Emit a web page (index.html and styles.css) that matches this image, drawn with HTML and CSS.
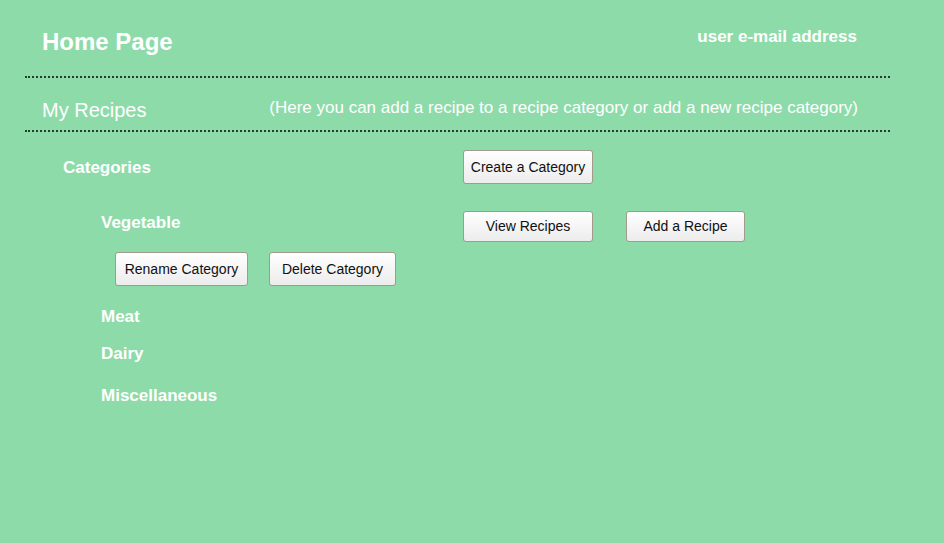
FILE: index.html
```html
<!DOCTYPE html>
<html>
<head>
<meta charset="utf-8">
<link rel="stylesheet" href="styles.css">
</head>
<body>
<div class="page">
  <header class="top">
    <h1 class="title">Home Page</h1>
    <div class="email">user e-mail address</div>
  </header>
  <section class="sub">
    <h2 class="subtitle">My Recipes</h2>
    <p class="hint">(Here you can add a recipe to a recipe category or add a new recipe category)</p>
  </section>
  <main class="content">
    <div class="row row-cats">
      <div class="label label-cats">Categories</div>
      <button class="btn btn-create">Create a Category</button>
    </div>
    <div class="row row-veg">
      <div class="label label-cat">Vegetable</div>
      <button class="btn btn-view">View Recipes</button>
      <button class="btn btn-add">Add a Recipe</button>
    </div>
    <div class="row row-edit">
      <button class="btn btn-rename">Rename Category</button>
      <button class="btn btn-delete">Delete Category</button>
    </div>
    <div class="cat cat-meat">Meat</div>
    <div class="cat cat-dairy">Dairy</div>
    <div class="cat cat-misc">Miscellaneous</div>
  </main>
</div>
</body>
</html>
```

FILE: styles.css
```css
html, body {
  margin: 0;
  padding: 0;
  background: #8edbaa;
  font-family: "Liberation Sans", Arial, sans-serif;
  color: #fff;
}
.page {
  width: 944px;
  height: 543px;
}
.top {
  margin-left: 25px;
  width: 865px;
  box-sizing: border-box;
  height: 78px;
  padding: 28px 33px 0 17px;
  display: flex;
  justify-content: space-between;
  align-items: flex-start;
  border-bottom: 2px dotted #2a3a30;
}
.title {
  margin: 0;
  font-size: 24px;
  line-height: 28px;
  font-weight: bold;
}
.email {
  font-size: 17px;
  line-height: 20px;
  font-weight: bold;
  margin-top: -1px;
}
.sub {
  margin-left: 25px;
  width: 865px;
  box-sizing: border-box;
  height: 54px;
  padding: 20px 32px 0 17px;
  display: flex;
  justify-content: space-between;
  align-items: flex-start;
  border-bottom: 2px dotted #2a3a30;
}
.subtitle {
  margin: 0;
  font-size: 20px;
  line-height: 24px;
  font-weight: normal;
}
.hint {
  margin: 0;
  font-size: 17px;
  line-height: 20px;
  margin-top: 0;
}
.content {
  padding-top: 18px;
}
.row {
  display: flex;
  align-items: flex-start;
}
.label {
  font-size: 17px;
  line-height: 20px;
  font-weight: bold;
}
.label-cats {
  padding-left: 63px;
  width: 400px;
  margin-top: 8px;
}
.row-veg {
  margin-top: 27px;
}
.label-cat {
  padding-left: 101px;
  width: 362px;
  margin-top: 2px;
}
.row-edit {
  margin-top: 10px;
  padding-left: 115px;
  gap: 21px;
}
.btn {
  font-family: "Liberation Sans", Arial, sans-serif;
  font-size: 14px;
  color: #111;
  background: linear-gradient(#ffffff, #ececec);
  border: 1px solid #a39a8e;
  border-radius: 3px;
  padding: 0 0 1px;
  box-sizing: border-box;
  text-align: center;
}
.btn-create { width: 130px; height: 34px; }
.btn-view { width: 130px; height: 31px; }
.btn-add { width: 119px; height: 31px; margin-left: 33px; }
.btn-rename { width: 133px; height: 34px; }
.btn-delete { width: 127px; height: 34px; }
.cat {
  font-size: 17px;
  line-height: 20px;
  font-weight: bold;
  padding-left: 101px;
}
.cat-meat { margin-top: 21px; }
.cat-dairy { margin-top: 17px; }
.cat-misc { margin-top: 22px; }
```
